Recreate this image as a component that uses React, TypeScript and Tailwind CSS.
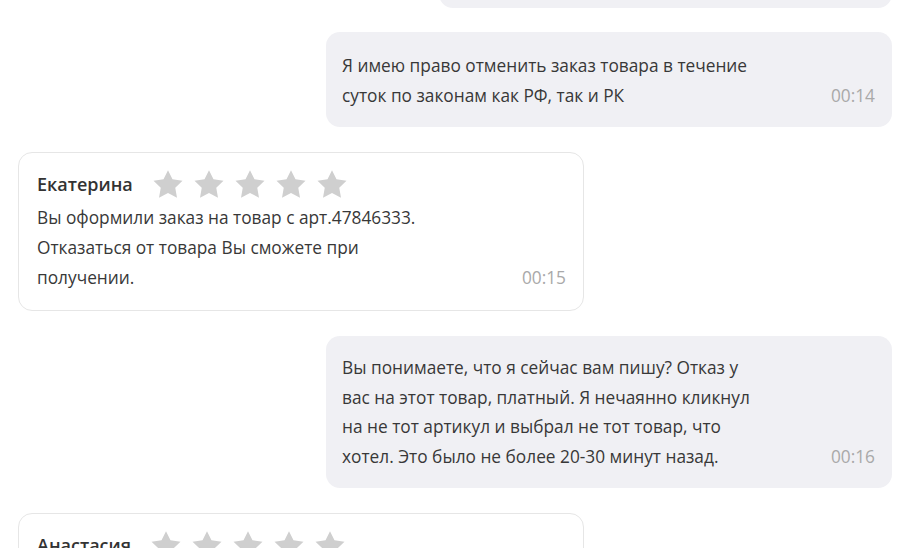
const font = { fontFamily: '"Open Sans", "Noto Sans", sans-serif' };

function Star() {
  return (
    <svg width="30" height="29" viewBox="0 0 24 23" className="shrink-0">
      <path
        d="M12 0l3.6 7.3 8 1.1-5.8 5.6 1.4 8L12 18.2l-7.2 3.8 1.4-8L0.4 8.4l8-1.1z"
        fill="#cfcfcf"
      />
    </svg>
  );
}

function Outgoing({ lines, time, className = "" }: { lines: string[]; time: string; className?: string }) {
  return (
    <div className={`ml-auto w-[566px] rounded-[14px] bg-[#f0f0f4] pl-4 pr-[17px] ${className}`}>
      <div className="flex items-end justify-between text-[17.3px] leading-[29.5px] text-[#383838]">
        <div>
          {lines.map((l) => (
            <div key={l}>{l}</div>
          ))}
        </div>
        <span className="text-[#a9a9a9]">{time}</span>
      </div>
    </div>
  );
}

function Incoming({ name, lines, time, className = "" }: { name: string; lines: string[]; time: string; className?: string }) {
  return (
    <div className={`w-[566px] rounded-[14px] border border-[#e6e6e6] bg-white pl-[18px] pr-[17px] ${className}`}>
      <div className="flex items-center gap-[20px]">
        <span className="text-[18px] font-semibold text-[#333333]">{name}</span>
        <div className="flex gap-[11px]">
          <Star />
          <Star />
          <Star />
          <Star />
          <Star />
        </div>
      </div>
      <div className="mt-[4px] flex items-end justify-between text-[17.3px] leading-[30px] text-[#383838]">
        <div>
          {lines.map((l) => (
            <div key={l}>{l}</div>
          ))}
        </div>
        <span className="text-[#a9a9a9]">{time}</span>
      </div>
    </div>
  );
}

export default function App() {
  return (
    <div className="h-[548px] w-[900px] overflow-hidden bg-white pl-[18px] pr-2" style={font}>
      <div className="ml-auto -mt-[40px] h-[48px] w-[453px] rounded-[14px] bg-[#f0f0f4]" />
      <Outgoing
        className="mt-6 pt-[19px] pb-[17px]"
        lines={["Я имею право отменить заказ товара в течение", "суток по законам как РФ, так и РК"]}
        time="00:14"
      />
      <Incoming
        className="mt-[25px] pt-[17px] pb-[17px]"
        name="Екатерина"
        lines={[
          "Вы оформили заказ на товар с арт.47846333.",
          "Отказаться от товара Вы сможете при",
          "получении.",
        ]}
        time="00:15"
      />
      <Outgoing
        className="mt-[25px] pt-[17px] pb-[17px]"
        lines={[
          "Вы понимаете, что я сейчас вам пишу? Отказ у",
          "вас на этот товар, платный. Я нечаянно кликнул",
          "на не тот артикул и выбрал не тот товар, что",
          "хотел. Это было не более 20-30 минут назад.",
        ]}
        time="00:16"
      />
      <Incoming
        className="mt-[25px] pt-[17px] pb-[17px]"
        name="Анастасия"
        lines={["Здравствуйте!"]}
        time="00:17"
      />
    </div>
  );
}
